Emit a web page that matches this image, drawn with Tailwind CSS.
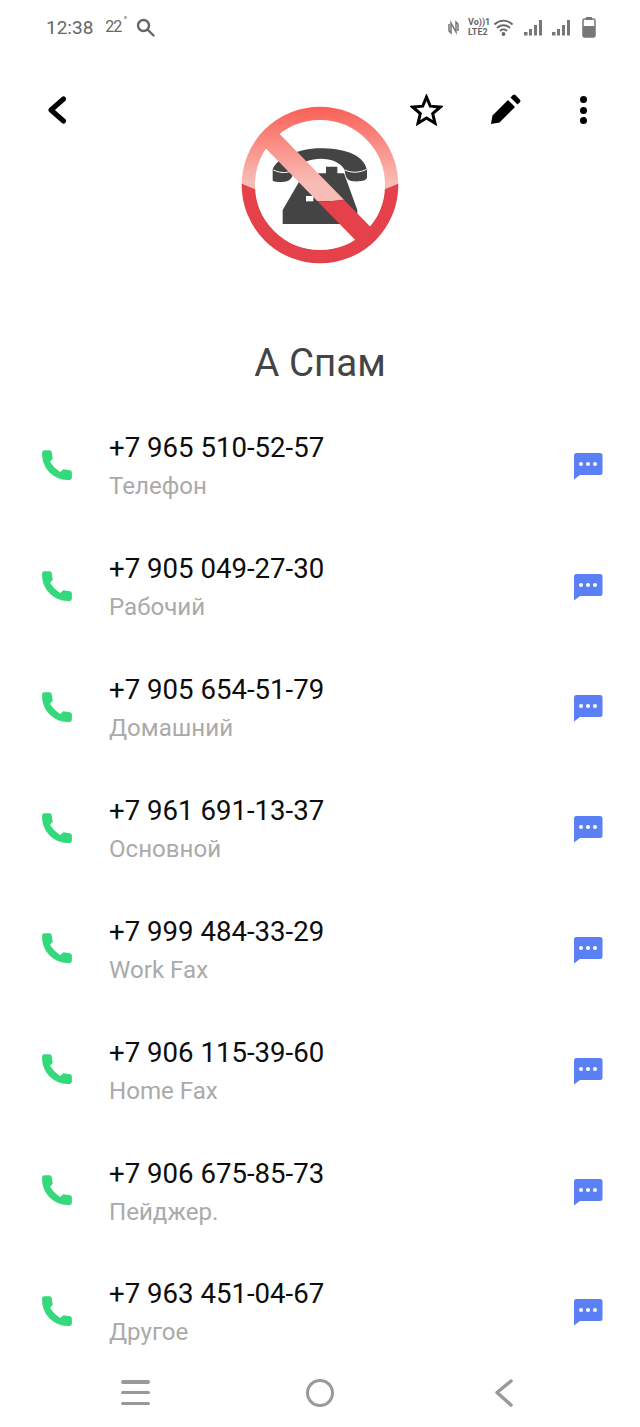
<!DOCTYPE html>
<html lang="en">
<head>
    <meta charset="UTF-8">
    <title>Contact</title>
    <script src="https://cdn.jsdelivr.net/npm/@tailwindcss/browser@4"></script>
</head>
<body class="bg-white font-['Roboto',sans-serif]">
<svg width="0" height="0" class="absolute">
    <symbol id="call" viewBox="0 0 32 32">
        <path fill="#34d97b" d="M2 4a2 2 0 0 1 2-2h5a2 2 0 0 1 2 2l1 6-2.500 3C12 17 15 20 19 22.500l3-2.500 6 1a2 2 0 0 1 2 2v5a2 2 0 0 1-2 2h-2C13 30 2 19 2 6z"/>
    </symbol>
    <symbol id="msg" viewBox="0 0 30 28">
        <path fill="#5b7ff5" d="M3 1h24a2.500 2.500 0 0 1 2.500 2.500v17a2.500 2.500 0 0 1-2.500 2.500H7l-6 4.500V3.500A2.500 2.500 0 0 1 3 1z"/>
        <circle cx="8" cy="12" r="2" fill="#fff"/><circle cx="15" cy="12" r="2" fill="#fff"/><circle cx="22" cy="12" r="2" fill="#fff"/>
    </symbol>
</svg>
<div class="relative w-[640px] h-[1427px] overflow-hidden flex flex-col">
    <!-- Status bar -->
    <div class="h-[54px] shrink-0 flex items-center justify-between pl-[46px] pr-[44px] text-[#666]">
        <div class="flex items-center">
            <span class="text-[19px] leading-none">12:38</span>
            <span class="ml-[12px] text-[16px] leading-none tracking-[-1px] relative">22<span class="absolute -top-[3px] -right-[5px] text-[10px]">°</span></span>
            <svg class="ml-[15px]" width="19" height="19" viewBox="0 0 19 19" fill="none" stroke="#666" stroke-width="2.400" stroke-linecap="round"><circle cx="7.500" cy="7.500" r="5.500"/><path d="M12 12l5.500 5.500"/></svg>
        </div>
        <div class="flex items-center">
            <svg width="11" height="15" viewBox="0 0 11 15" fill="none" stroke="#777" stroke-width="1.500"><path d="M1 4v7l2 2V3l5 9V2l2 2v7"/></svg>
            <div class="ml-[9px] flex flex-col items-start text-[9px] leading-[10px] font-bold text-[#666] w-[24px]"><span>Vo))1</span><span>LTE2</span></div>
            <svg class="ml-[2px]" width="19" height="17" viewBox="0 0 19 17" fill="none" stroke="#666" stroke-width="1.800" stroke-linecap="round"><path d="M1 5c5-4.500 12-4.500 17 0M3.500 8.500c3.500-3 8.500-3 12 0M6.500 11.500c2-1.500 4-1.500 6 0"/><circle cx="9.500" cy="15" r="1" fill="#666"/></svg>
            <svg class="ml-[11px]" width="19" height="17" viewBox="0 0 19 17" fill="#777"><rect x="0" y="13" width="3.500" height="3.500"/><rect x="5" y="10" width="3" height="6.500"/><rect x="10" y="6" width="3" height="10.500"/><rect x="15" y="1" width="3" height="15.500"/></svg>
            <svg class="ml-[9px]" width="19" height="17" viewBox="0 0 19 17" fill="#777"><rect x="0" y="13" width="3.500" height="3.500"/><rect x="5" y="10" width="3" height="6.500"/><rect x="10" y="6" width="3" height="10.500"/><rect x="15" y="1" width="3" height="15.500"/></svg>
            <svg class="ml-[11px]" width="14" height="21" viewBox="0 0 14 21"><rect x="4" y="0" width="6" height="3" fill="#777"/><rect x="1" y="2" width="12" height="18" rx="1.500" fill="none" stroke="#777" stroke-width="1.500"/><rect x="1" y="9" width="12" height="11" rx="1" fill="#777"/></svg>
        </div>
    </div>

    <!-- Avatar and name, toolbar sits over the avatar block -->
    <div class="relative shrink-0 flex flex-col items-center pt-[36px] pb-[21px]">
        <div class="absolute top-[40px] left-0 right-0 flex items-center h-[32px]">
            <svg class="ml-[47px]" width="20" height="28" viewBox="0 0 20 28" fill="none" stroke="#000" stroke-width="5" stroke-linecap="round" stroke-linejoin="round"><path d="M16.500 3L4 14l12.500 11"/></svg>
            <svg class="ml-[343px]" width="33" height="32" viewBox="0 0 33 32" fill="none" stroke="#000" stroke-width="3" stroke-linejoin="miter"><path d="M16.500 3l3.800 9.200 10 .8-7.600 6.500 2.300 9.700-8.500-5.200-8.500 5.200 2.300-9.700L2.700 13l10-.8z"/></svg>
            <svg class="ml-[46px]" width="33" height="32" viewBox="0 0 33 32" fill="#000"><path d="M2 30l1.500-8.500L19 6l7 7L10.500 28.500z"/><path d="M21.500 3.500l2.300-2.300a2 2 0 0 1 2.800 0l4.200 4.200a2 2 0 0 1 0 2.800L28.500 10.500z"/></svg>
            <div class="ml-[58px] flex flex-col gap-[3.500px]">
                <span class="block w-[7px] h-[7px] rounded-full bg-black"></span>
                <span class="block w-[7px] h-[7px] rounded-full bg-black"></span>
                <span class="block w-[7px] h-[7px] rounded-full bg-black"></span>
            </div>
        </div>
        <svg width="200" height="190" viewBox="0 0 600 570">
            <defs>
                <linearGradient id="glass" x1="0" y1="50" x2="0" y2="335" gradientUnits="userSpaceOnUse">
                    <stop offset="0" stop-color="#fa5f55"/>
                    <stop offset="0.8" stop-color="#f8bcb6"/>
                    <stop offset="1" stop-color="#f8bcb6"/>
                </linearGradient>
                <clipPath id="upper"><path d="M0 0H600V278H540Q300 390 60 278H0z"/></clipPath>
                <clipPath id="lower"><path d="M0 600H600V278H540Q300 390 60 278H0z"/></clipPath>
            </defs>
            <!-- telephone -->
            <path fill="#444" d="M158 270V238C170 205 235 175 300 175S430 190 441 240V262C441 272 425 275 400 274C385 273 376 265 374 240C350 195 260 195 222 240C220 262 210 276 185 276C165 276 158 275 158 270z"/>
            <path fill="#444" d="M252 250H318V230H352V250H372L412 360V402H188V360z"/>
            <rect x="258" y="318" width="22" height="16" fill="#fff"/>
            <path d="M160 240C185 252 205 248 222 240M375 240C395 250 420 248 440 238" fill="none" stroke="#fff" stroke-width="3"/>
            <g clip-path="url(#upper)">
                <circle cx="300" cy="285" r="215" fill="none" stroke="url(#glass)" stroke-width="40"/>
                <path d="M140 135L445 447" stroke="url(#glass)" stroke-width="60"/>
            </g>
            <g clip-path="url(#lower)">
                <circle cx="300" cy="285" r="215" fill="none" stroke="#e4414a" stroke-width="40"/>
                <path d="M140 135L445 447" stroke="#e4414a" stroke-width="60"/>
            </g>
        </svg>
        <h1 class="mt-[61px] text-[38.500px] leading-[44px] font-normal text-[#444]">А Спам</h1>
    </div>

    <!-- Numbers -->
    <ul class="flex flex-col">
        <li class="h-[120.860px] shrink-0 flex items-center pl-[40px] pr-[37px]">
            <svg class="w-[34px] h-[34px] shrink-0 -mt-[3px]"><use href="#call"/></svg>
            <div class="ml-[35px] flex-1 mt-[2px]"><div class="text-[27.600px] leading-[36px] text-[#0d0d0d]">+7 965 510-52-57</div><div class="mt-[2px] text-[24.100px] leading-[36px] text-[#aaa]">Телефон</div></div>
            <svg class="w-[30px] h-[28px]"><use href="#msg"/></svg>
        </li>
        <li class="h-[120.860px] shrink-0 flex items-center pl-[40px] pr-[37px]">
            <svg class="w-[34px] h-[34px] shrink-0 -mt-[3px]"><use href="#call"/></svg>
            <div class="ml-[35px] flex-1 mt-[2px]"><div class="text-[27.600px] leading-[36px] text-[#0d0d0d]">+7 905 049-27-30</div><div class="mt-[2px] text-[24.100px] leading-[36px] text-[#aaa]">Рабочий</div></div>
            <svg class="w-[30px] h-[28px]"><use href="#msg"/></svg>
        </li>
        <li class="h-[120.860px] shrink-0 flex items-center pl-[40px] pr-[37px]">
            <svg class="w-[34px] h-[34px] shrink-0 -mt-[3px]"><use href="#call"/></svg>
            <div class="ml-[35px] flex-1 mt-[2px]"><div class="text-[27.600px] leading-[36px] text-[#0d0d0d]">+7 905 654-51-79</div><div class="mt-[2px] text-[24.100px] leading-[36px] text-[#aaa]">Домашний</div></div>
            <svg class="w-[30px] h-[28px]"><use href="#msg"/></svg>
        </li>
        <li class="h-[120.860px] shrink-0 flex items-center pl-[40px] pr-[37px]">
            <svg class="w-[34px] h-[34px] shrink-0 -mt-[3px]"><use href="#call"/></svg>
            <div class="ml-[35px] flex-1 mt-[2px]"><div class="text-[27.600px] leading-[36px] text-[#0d0d0d]">+7 961 691-13-37</div><div class="mt-[2px] text-[24.100px] leading-[36px] text-[#aaa]">Основной</div></div>
            <svg class="w-[30px] h-[28px]"><use href="#msg"/></svg>
        </li>
        <li class="h-[120.860px] shrink-0 flex items-center pl-[40px] pr-[37px]">
            <svg class="w-[34px] h-[34px] shrink-0 -mt-[3px]"><use href="#call"/></svg>
            <div class="ml-[35px] flex-1 mt-[2px]"><div class="text-[27.600px] leading-[36px] text-[#0d0d0d]">+7 999 484-33-29</div><div class="mt-[2px] text-[24.100px] leading-[36px] text-[#aaa]">Work Fax</div></div>
            <svg class="w-[30px] h-[28px]"><use href="#msg"/></svg>
        </li>
        <li class="h-[120.860px] shrink-0 flex items-center pl-[40px] pr-[37px]">
            <svg class="w-[34px] h-[34px] shrink-0 -mt-[3px]"><use href="#call"/></svg>
            <div class="ml-[35px] flex-1 mt-[2px]"><div class="text-[27.600px] leading-[36px] text-[#0d0d0d]">+7 906 115-39-60</div><div class="mt-[2px] text-[24.100px] leading-[36px] text-[#aaa]">Home Fax</div></div>
            <svg class="w-[30px] h-[28px]"><use href="#msg"/></svg>
        </li>
        <li class="h-[120.860px] shrink-0 flex items-center pl-[40px] pr-[37px]">
            <svg class="w-[34px] h-[34px] shrink-0 -mt-[3px]"><use href="#call"/></svg>
            <div class="ml-[35px] flex-1 mt-[2px]"><div class="text-[27.600px] leading-[36px] text-[#0d0d0d]">+7 906 675-85-73</div><div class="mt-[2px] text-[24.100px] leading-[36px] text-[#aaa]">Пейджер.</div></div>
            <svg class="w-[30px] h-[28px]"><use href="#msg"/></svg>
        </li>
        <li class="h-[120.860px] shrink-0 flex items-center pl-[40px] pr-[37px]">
            <svg class="w-[34px] h-[34px] shrink-0 -mt-[3px]"><use href="#call"/></svg>
            <div class="ml-[35px] flex-1 mt-[2px]"><div class="text-[27.600px] leading-[36px] text-[#0d0d0d]">+7 963 451-04-67</div><div class="mt-[2px] text-[24.100px] leading-[36px] text-[#aaa]">Другое</div></div>
            <svg class="w-[30px] h-[28px]"><use href="#msg"/></svg>
        </li>
    </ul>

    <!-- Navigation bar -->
    <div class="absolute bottom-0 left-0 right-0 h-[67px] bg-white flex items-start pt-[19px]">
        <div class="ml-[121px] w-[29px] h-[26px] flex flex-col justify-between pt-[1px]">
            <span class="block h-[3.500px] rounded-full bg-[#999]"></span>
            <span class="block h-[3.500px] rounded-full bg-[#999]"></span>
            <span class="block h-[3.500px] rounded-full bg-[#999]"></span>
        </div>
        <span class="ml-[156px] block w-[28px] h-[28px] rounded-full border-[3.500px] border-[#999]"></span>
        <svg class="ml-[160px]" width="20" height="28" viewBox="0 0 20 28" fill="none" stroke="#999" stroke-width="3.500" stroke-linecap="round" stroke-linejoin="round"><path d="M17 2L3 13.500 17 26"/></svg>
    </div>
</div>
</body>
</html>
